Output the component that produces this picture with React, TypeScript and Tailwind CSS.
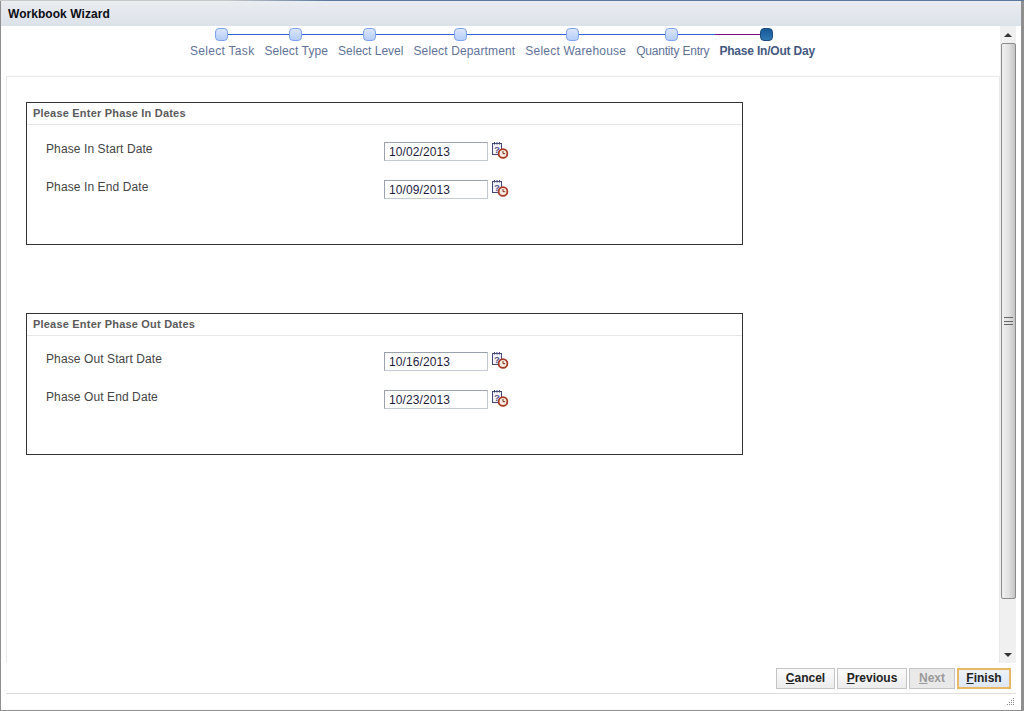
import React from 'react';

const steps = [
  { label: 'Select Task', track: 'tracking-[0.3px]', line: '', node: 'mr-[1px]' },
  { label: 'Select Type', track: 'tracking-[0.1px]', line: 'w-[73px]', node: 'mr-[2px]' },
  { label: 'Select Level', track: 'tracking-[0px]', line: 'w-[74px]', node: 'mr-[2px]' },
  { label: 'Select Department', track: 'tracking-[0.15px]', line: 'w-[91px]', node: 'mr-[8px]' },
  { label: 'Select Warehouse', track: 'tracking-[0.2px]', line: 'w-[112px]', node: 'mr-[6px]' },
  { label: 'Quantity Entry', track: 'tracking-[-0.2px]', line: 'w-[100px]', node: 'mr-[2px]' },
  { label: 'Phase In/Out Day', track: 'tracking-[-0.2px]', line: 'w-[95px]', node: 'mr-[1px]', active: true },
];

const CalendarIcon = () => (
  <svg width="18" height="18" viewBox="0 0 18 18" className="ml-[3px] shrink-0">
    <rect x="1.5" y="1.5" width="9" height="11" fill="#f2f3fa" stroke="#44487a" />
    <path d="M3.5 0v2.5M6 0v2.5M8.5 0v2.5" stroke="#44487a" strokeWidth="1" />
    <text x="3" y="10.5" fontSize="9.5" fontWeight="700" fontFamily="Liberation Sans" fill="#55588a">?</text>
    <circle cx="12" cy="11.5" r="4.4" fill="#f9ede2" stroke="#a93a25" strokeWidth="1.8" />
    <path d="M12 9v2.7h2.2" stroke="#7a2a1c" strokeWidth="1" fill="none" />
  </svg>
);

const DateRow = ({ label, value }: { label: string; value: string }) => (
  <div className="flex h-[19px] items-start">
    <span className="w-[357px] pl-[19px] text-[12px] leading-[14px] tracking-[0.1px] text-[#444444]">{label}</span>
    <input
      readOnly
      value={value}
      className="h-[19px] w-[104px] border border-[#c3cad3] border-t-[#9aa2ad] border-l-[#9aa2ad] bg-white px-[4px] text-[12px] tracking-[0.1px] text-[#1c1c40] outline-none"
    />
    <CalendarIcon />
  </div>
);

const DateBox = ({ title, rows, boxClass, rowsClass }: { title: string; rows: { label: string; value: string }[]; boxClass: string; rowsClass: string }) => (
  <div className={`w-[717px] border border-[#333333] ${boxClass}`}>
    <div className="h-[22px] border-b border-[#e6e6e6] pl-[6px] pt-[3px] text-[11px] font-bold leading-[15px] tracking-[0.2px] text-[#5a5a5a]">
      {title}
    </div>
    <div className={`flex flex-col gap-[19px] ${rowsClass}`}>
      {rows.map(r => (
        <DateRow key={r.label} {...r} />
      ))}
    </div>
  </div>
);

const FooterButton = ({ hot, rest, disabled, focused, width }: { hot: string; rest: string; disabled?: boolean; focused?: boolean; width: string }) => (
  <button
    className={`h-[21px] ${width} text-[12px] font-bold leading-[17px] ${
      focused
        ? 'border-2 border-[#e8b868] bg-linear-to-b from-[#eef3fa] to-[#dde7f4] text-[#222222]'
        : disabled
          ? 'border border-[#c4c4c4] bg-[#e9e9e9] text-[#9a9a9a]'
          : 'border border-[#c4c4c4] bg-linear-to-b from-[#fbfbfb] to-[#ececec] text-[#222222]'
    }`}
  >
    <span className="underline">{hot}</span>
    {rest}
  </button>
);

export default function App() {
  return (
    <div className="flex h-[711px] w-[1024px] flex-col overflow-hidden bg-[#8f8f8f] font-['Liberation_Sans',Arial,sans-serif]">
      <div className="h-px shrink-0 bg-linear-to-r from-[#c8c8c8] from-[22%] to-[#5b7a9e] to-[32%]" />

      <div className="flex min-h-0 flex-1 flex-col pb-px pl-px pr-[3px]">
        {/* Title */}
        <div className="h-[25px] shrink-0 bg-linear-to-b from-[#eaedf1] to-[#dce2e9] pl-[7px] pt-[6px] text-[12px] font-bold leading-[15px] tracking-[0.05px] text-[#0c0c14]">
          Workbook Wizard
        </div>

        <div className="flex min-h-0 flex-1 flex-col bg-white">
          <div className="flex min-h-0 flex-1">
            <div className="flex min-w-0 flex-1 flex-col">
              {/* Stepper */}
              <div className="flex h-[50px] shrink-0 gap-[10px] pl-[189px] pt-[2px]">
                {steps.map(s => (
                  <div key={s.label} className="relative flex flex-col items-center">
                    {s.line && <div className={`absolute right-1/2 top-[6px] h-px bg-[#2f63d4] ${s.line}`} />}
                    {s.active && <div className="absolute right-1/2 top-[6px] h-px w-[52px] bg-[#7a0f84]" />}
                    <div
                      className={`relative z-10 h-[13px] w-[13px] rounded-[4px] border ${s.node} ${
                        s.active
                          ? 'border-[#1d4d80] bg-linear-to-b from-[#175a97] to-[#2f78b5]'
                          : 'border-[#7ea3ef] bg-linear-to-b from-[#dbe6fb] to-[#b5cdf7]'
                      }`}
                    />
                    <span
                      className={`mt-[2px] whitespace-nowrap text-[12px] leading-[16px] ${s.track} ${
                        s.active ? 'font-bold text-[#44597f]' : 'text-[#5f7399]'
                      }`}
                    >
                      {s.label}
                    </span>
                  </div>
                ))}
              </div>

              {/* Content */}
              <div className="ml-[5px] flex min-h-0 flex-1 flex-col gap-[68px] border-l border-r border-t border-[#e8e8e8] pl-[19px] pt-[25px]">
                <DateBox
                  title="Please Enter Phase In Dates"
                  boxClass="h-[143px]"
                  rowsClass="pt-[17px]"
                  rows={[
                    { label: 'Phase In Start Date', value: '10/02/2013' },
                    { label: 'Phase In End Date', value: '10/09/2013' },
                  ]}
                />
                <DateBox
                  title="Please Enter Phase Out Dates"
                  boxClass="h-[142px]"
                  rowsClass="pt-[16px]"
                  rows={[
                    { label: 'Phase Out Start Date', value: '10/16/2013' },
                    { label: 'Phase Out End Date', value: '10/23/2013' },
                  ]}
                />
              </div>
            </div>

            {/* Scrollbar */}
            <div className="mr-[5px] flex w-[16px] shrink-0 flex-col items-center bg-[#f0f0f0]">
              <div className="flex h-[17px] items-center justify-center">
                <div className="h-0 w-0 border-x-[4px] border-b-[4px] border-x-transparent border-b-[#333333]" />
              </div>
              <div className="flex h-[556px] w-[15px] items-center justify-center rounded-[2px] border border-[#8b8b8b] bg-linear-to-r from-[#f0f0f0] via-[#e2e2e2] to-[#c4c4c4]">
                <div className="flex h-[10px] w-[9px] flex-col justify-between py-px">
                  <div className="h-px bg-[#666666]" />
                  <div className="h-px bg-[#666666]" />
                  <div className="h-px bg-[#666666]" />
                </div>
              </div>
              <div className="flex-1" />
              <div className="flex h-[17px] items-center justify-center">
                <div className="h-0 w-0 border-x-[4px] border-t-[4px] border-x-transparent border-t-[#333333]" />
              </div>
            </div>
          </div>

          {/* Footer */}
          <div className="flex h-[30px] shrink-0 justify-end gap-[2px] pr-[10px] pt-[5px]">
            <FooterButton hot="C" rest="ancel" width="w-[59px]" />
            <FooterButton hot="P" rest="revious" width="w-[70px]" />
            <FooterButton hot="N" rest="ext" width="w-[46px]" disabled />
            <FooterButton hot="F" rest="inish" width="w-[54px]" focused />
          </div>

          <div className="relative ml-[5px] mr-[5px] h-[17px] shrink-0 border-t border-[#dddddd]">
            {/* resize grip */}
            <svg width="10" height="10" viewBox="0 0 10 10" className="absolute bottom-[3px] right-[1px]">
              <path d="M8 1h1v1H8zM6 3h1v1H6zM8 3h1v1H8zM4 5h1v1H4zM6 5h1v1H6zM8 5h1v1H8zM2 7h1v1H2zM4 7h1v1H4zM6 7h1v1H6zM8 7h1v1H8z" fill="#8a8a8a" />
            </svg>
          </div>
        </div>
      </div>
    </div>
  );
}
